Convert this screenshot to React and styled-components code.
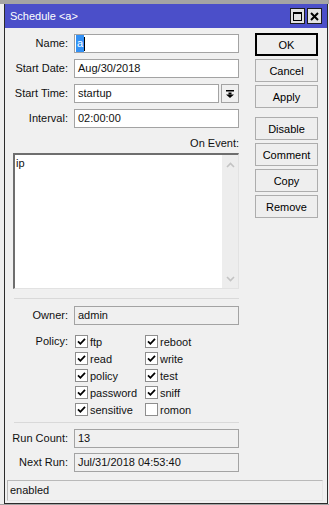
import styled, { createGlobalStyle } from 'styled-components';

const GlobalStyle = createGlobalStyle`
  html, body {
    margin: 0;
    padding: 0;
  }
  body {
    background: linear-gradient(#a4a4a4 0 4px, #eeeeee 4px);
    font-family: "Liberation Sans", Arial, sans-serif;
    font-size: 11px;
    color: #111;
    overflow: hidden;
  }
`;

const Window = styled.div`
  box-sizing: border-box;
  width: 324px;
  height: 500px;
  margin: 4px 0 0 4px;
  border: 1px solid #2b2b2b;
  border-top: 0;
  background: #f0f0f0;
  display: flex;
  flex-direction: column;
`;

const TitleBar = styled.div`
  height: 24px;
  flex: none;
  background: #4b4fc9;
  color: #fff;
  display: flex;
  align-items: center;
  padding: 0 5px;
`;

const Title = styled.span`
  flex: 1;
`;

const TitleButtons = styled.div`
  display: flex;
  gap: 2px;
`;

const TitleButton = styled.div`
  box-sizing: border-box;
  width: 15px;
  height: 16px;
  background: #e2e2e2;
  border: 1px solid #1c1c1c;
  display: flex;
  align-items: center;
  justify-content: center;
`;

const Body = styled.div`
  display: flex;
`;

const FormPane = styled.div`
  width: 234px;
  padding-top: 6px;
`;

const FieldGrid = styled.div`
  display: grid;
  grid-template-columns: 63px 165px;
  column-gap: 6px;
  row-gap: ${(p) => p.$gap || 6}px;
`;

const Label = styled.div`
  text-align: right;
  line-height: ${(p) => p.$line || 19}px;
  white-space: nowrap;
`;

const Field = styled.div`
  box-sizing: border-box;
  height: 19px;
  border: 1px solid #a3a3a3;
  background: ${(p) => (p.$readOnly ? '#f0f0f0' : '#fff')};
  padding: 0 3px;
  line-height: 17px;
  white-space: nowrap;
  overflow: hidden;
  display: flex;
  align-items: center;
`;

const Selection = styled.span`
  display: inline-block;
  height: 17px;
  line-height: 17px;
  margin-left: -2px;
  padding: 0 1px;
  background: #3391f5;
  color: #fff;
`;

const Caret = styled.span`
  display: inline-block;
  width: 1px;
  height: 14px;
  background: #000;
`;

const Combo = styled.div`
  display: flex;
  gap: 2px;
`;

const ComboField = styled(Field)`
  flex: 1;
`;

const DropButton = styled.div`
  box-sizing: border-box;
  width: 18px;
  height: 19px;
  border: 1px solid #a3a3a3;
  background: #f0f0f0;
  display: flex;
  align-items: center;
  justify-content: center;
`;

const SectionLabel = styled.div`
  text-align: right;
  line-height: 19px;
  margin-top: 6px;
`;

const Editor = styled.div`
  box-sizing: border-box;
  margin-left: 8px;
  height: 136px;
  display: flex;
  background: #fff;
  border-style: solid;
  border-width: 2px 1px 1px 2px;
  border-color: #6e6e6e #e2e2e2 #e2e2e2 #6e6e6e;
`;

const EditorText = styled.div`
  flex: 1;
  padding: 2px 1px;
  line-height: 13px;
`;

const ScrollTrack = styled.div`
  width: 16px;
  background: #ededed;
  display: flex;
  flex-direction: column;
  align-items: center;
  justify-content: space-between;
  padding: 7px 0 6px;
`;

const Separator = styled.div`
  height: 1px;
  background: #d9d9d9;
  margin: ${(p) => p.$top}px 0 0 9px;
`;

const Section = styled.div`
  margin-top: ${(p) => p.$top}px;
`;

const PolicyGrid = styled.div`
  display: grid;
  grid-template-columns: 70px 95px;
  grid-auto-rows: 17px;
`;

const CheckItem = styled.label`
  display: flex;
  align-items: center;
  white-space: nowrap;
`;

const Box = styled.span`
  box-sizing: border-box;
  width: 13px;
  height: 13px;
  margin: 0 2px 0 1px;
  border: 1px solid #8e8e8e;
  background: #fff;
  display: flex;
  align-items: center;
  justify-content: center;
`;

const ButtonColumn = styled.div`
  width: 63px;
  margin-left: 16px;
  padding-top: 5px;
  display: flex;
  flex-direction: column;
  gap: 3px;
`;

const ActionButton = styled.div`
  box-sizing: border-box;
  height: 23px;
  margin-top: ${(p) => (p.$spaced ? 6 : 0)}px;
  border: 1px solid ${(p) => (p.$default ? '#000' : '#adadad')};
  box-shadow: ${(p) => (p.$default ? 'inset 0 0 0 1px #000' : 'none')};
  background: #eeeeee;
  color: #000;
  display: flex;
  align-items: center;
  justify-content: center;
`;

const StatusBar = styled.div`
  box-sizing: border-box;
  height: 21px;
  margin: auto 4px 2px 2px;
  border: 1px solid #b9b9b9;
  border-right-color: #e6e6e6;
  border-bottom-color: #e6e6e6;
  padding-left: 2px;
  line-height: 19px;
`;

const Check = () => (
  <svg width="9" height="9" viewBox="0 0 9 9">
    <path d="M1 4.4 L3.4 6.8 L8 1.8" fill="none" stroke="#000" strokeWidth="1.8" />
  </svg>
);

const Chevron = ({ up }) => (
  <svg width="9" height="6" viewBox="0 0 9 6">
    <path
      d={up ? 'M1 5 L4.5 1.5 L8 5' : 'M1 1 L4.5 4.5 L8 1'}
      fill="none"
      stroke="#c3c3c3"
      strokeWidth="1.6"
    />
  </svg>
);

const policies = [
  ['ftp', true],
  ['reboot', true],
  ['read', true],
  ['write', true],
  ['policy', true],
  ['test', true],
  ['password', true],
  ['sniff', true],
  ['sensitive', true],
  ['romon', false],
];

export default function App() {
  return (
    <>
      <GlobalStyle />
      <Window>
        <TitleBar>
          <Title>Schedule &lt;a&gt;</Title>
          <TitleButtons>
            <TitleButton>
              <svg width="9" height="9" viewBox="0 0 9 9">
                <rect x="0.5" y="0.5" width="8" height="8" fill="none" stroke="#000" />
                <rect x="0" y="0" width="9" height="2" fill="#000" />
              </svg>
            </TitleButton>
            <TitleButton>
              <svg width="9" height="9" viewBox="0 0 9 9">
                <path d="M1 1 L8 8 M8 1 L1 8" stroke="#000" strokeWidth="2" />
              </svg>
            </TitleButton>
          </TitleButtons>
        </TitleBar>

        <Body>
          <FormPane>
            <FieldGrid>
              <Label>Name:</Label>
              <Field>
                <Selection>a</Selection>
                <Caret />
              </Field>
              <Label>Start Date:</Label>
              <Field>Aug/30/2018</Field>
              <Label>Start Time:</Label>
              <Combo>
                <ComboField>startup</ComboField>
                <DropButton>
                  <svg width="8" height="8" viewBox="0 0 8 8">
                    <rect x="0" y="0" width="8" height="1.5" fill="#000" />
                    <rect x="2.5" y="2.5" width="3" height="2" fill="#000" />
                    <path d="M0 4.5 L8 4.5 L4 8 Z" fill="#000" />
                  </svg>
                </DropButton>
              </Combo>
              <Label>Interval:</Label>
              <Field>02:00:00</Field>
            </FieldGrid>

            <SectionLabel>On Event:</SectionLabel>
            <Editor>
              <EditorText>ip</EditorText>
              <ScrollTrack>
                <Chevron up />
                <Chevron />
              </ScrollTrack>
            </Editor>

            <Separator $top={9} />

            <Section $top={7}>
              <FieldGrid>
                <Label>Owner:</Label>
                <Field $readOnly>admin</Field>
              </FieldGrid>
            </Section>

            <Section $top={8}>
              <FieldGrid>
                <Label $line={17}>Policy:</Label>
                <PolicyGrid>
                  {policies.map(([name, checked]) => (
                    <CheckItem key={name}>
                      <Box>{checked && <Check />}</Box>
                      {name}
                    </CheckItem>
                  ))}
                </PolicyGrid>
              </FieldGrid>
            </Section>

            <Separator $top={4} />

            <Section $top={6}>
              <FieldGrid $gap={5}>
                <Label>Run Count:</Label>
                <Field $readOnly>13</Field>
                <Label>Next Run:</Label>
                <Field $readOnly>Jul/31/2018 04:53:40</Field>
              </FieldGrid>
            </Section>
          </FormPane>

          <ButtonColumn>
            <ActionButton $default>OK</ActionButton>
            <ActionButton>Cancel</ActionButton>
            <ActionButton>Apply</ActionButton>
            <ActionButton $spaced>Disable</ActionButton>
            <ActionButton>Comment</ActionButton>
            <ActionButton>Copy</ActionButton>
            <ActionButton>Remove</ActionButton>
          </ButtonColumn>
        </Body>

        <StatusBar>enabled</StatusBar>
      </Window>
    </>
  );
}
